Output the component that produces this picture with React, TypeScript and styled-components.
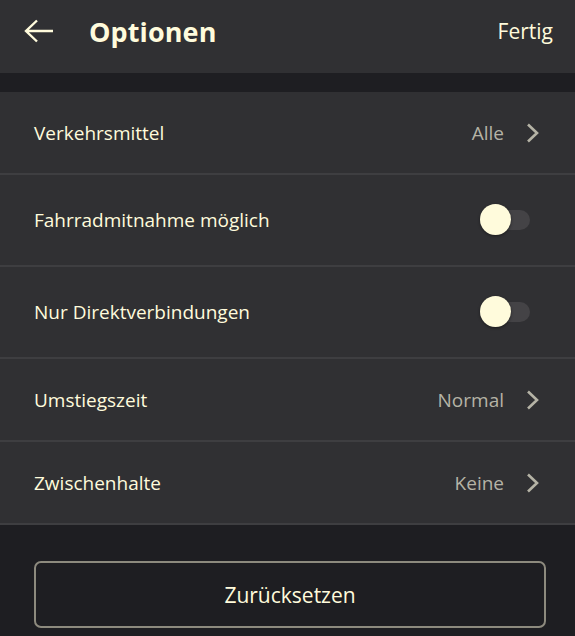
import React, { useState } from "react";
import styled, { createGlobalStyle } from "styled-components";

const Global = createGlobalStyle`
  html, body { margin: 0; padding: 0; }
  body {
    background: #1e1e22;
    font-family: "Open Sans", "Noto Sans", sans-serif;
    color: #fffbdc;
    -webkit-font-smoothing: antialiased;
  }
`;

const Screen = styled.div`
  width: 575px;
  min-height: 636px;
  display: flex;
  flex-direction: column;
  background: #1e1e22;
`;

const Header = styled.header`
  height: 73px;
  background: #303033;
  display: flex;
  align-items: center;
  padding: 0 22px 11px 24px;
  box-sizing: border-box;
`;

const BackButton = styled.button`
  background: none;
  border: none;
  padding: 0;
  margin: 0 35px 0 0;
  width: 30px;
  height: 30px;
  display: flex;
  align-items: center;
  justify-content: center;
  color: #fffbdc;
  cursor: pointer;
`;

const Title = styled.h1`
  margin: 0;
  flex: 1;
  font-size: 27px;
  font-weight: 700;
  letter-spacing: 0.1px;
  color: #fffbdc;
`;

const Done = styled.button`
  background: none;
  border: none;
  padding: 0;
  font-family: inherit;
  font-size: 21px;
  color: #fffbdc;
  cursor: pointer;
`;

const List = styled.ul`
  list-style: none;
  margin: 19px 0 0;
  padding: 0;
  background: #303033;
`;

const Row = styled.li<{ $tall?: boolean; $toggle?: boolean }>`
  height: ${(p) => (p.$tall ? 90 : 81)}px;
  border-bottom: 2px solid #3e3e41;
  display: flex;
  align-items: center;
  padding: 0 ${(p) => (p.$toggle ? 45 : 36)}px 0 34px;
`;

const Label = styled.span`
  flex: 1;
  font-size: 19px;
  color: #fffbdc;
`;

const Value = styled.span`
  font-size: 19px;
  color: #b5b3a6;
  margin-right: 22px;
`;

const Chevron = styled.svg`
  width: 13px;
  height: 20px;
  display: block;
`;

const Track = styled.button<{ $on: boolean }>`
  position: relative;
  width: 50px;
  height: 20px;
  border-radius: 10px;
  border: none;
  padding: 0;
  background: ${(p) => (p.$on ? "#7a776a" : "#444346")};
  cursor: pointer;
`;

const Thumb = styled.span<{ $on: boolean }>`
  position: absolute;
  top: 50%;
  left: ${(p) => (p.$on ? "19px" : "0px")};
  width: 31px;
  height: 31px;
  margin-top: -16px;
  border-radius: 50%;
  background: #fffbdc;
  box-shadow: 0 1px 3px rgba(0, 0, 0, 0.45);
`;

const Footer = styled.div`
  padding: 36px 29px 9px 34px;
`;

const ResetButton = styled.button`
  width: 100%;
  height: 67px;
  box-sizing: border-box;
  border: 2px solid #8d8a7e;
  border-radius: 7px;
  background: transparent;
  font-family: inherit;
  font-size: 21px;
  color: #fffbdc;
  cursor: pointer;
`;

const ChevronIcon = () => (
  <Chevron viewBox="0 0 13 20">
    <path d="M2 1.5 L11 10 L2 18.5" fill="none" stroke="#b5b3a6" strokeWidth="2.6" />
  </Chevron>
);

const Toggle = ({ initial = false }: { initial?: boolean }) => {
  const [on, setOn] = useState(initial);
  return (
    <Track $on={on} onClick={() => setOn(!on)} aria-pressed={on}>
      <Thumb $on={on} />
    </Track>
  );
};

export default function App() {
  return (
    <Screen>
      <Global />
      <Header>
        <BackButton aria-label="Zurück">
          <svg width="30" height="24" viewBox="0 0 30 24">
            <path
              d="M29 12 H2.5 M13 1.5 L2 12 L13 22.5"
              fill="none"
              stroke="#fffbdc"
              strokeWidth="2.4"
              strokeLinejoin="miter"
            />
          </svg>
        </BackButton>
        <Title>Optionen</Title>
        <Done>Fertig</Done>
      </Header>
      <List>
        <Row>
          <Label>Verkehrsmittel</Label>
          <Value>Alle</Value>
          <ChevronIcon />
        </Row>
        <Row $tall $toggle>
          <Label>Fahrradmitnahme möglich</Label>
          <Toggle />
        </Row>
        <Row $tall $toggle>
          <Label>Nur Direktverbindungen</Label>
          <Toggle />
        </Row>
        <Row>
          <Label>Umstiegszeit</Label>
          <Value>Normal</Value>
          <ChevronIcon />
        </Row>
        <Row>
          <Label>Zwischenhalte</Label>
          <Value>Keine</Value>
          <ChevronIcon />
        </Row>
      </List>
      <Footer>
        <ResetButton>Zurücksetzen</ResetButton>
      </Footer>
    </Screen>
  );
}
